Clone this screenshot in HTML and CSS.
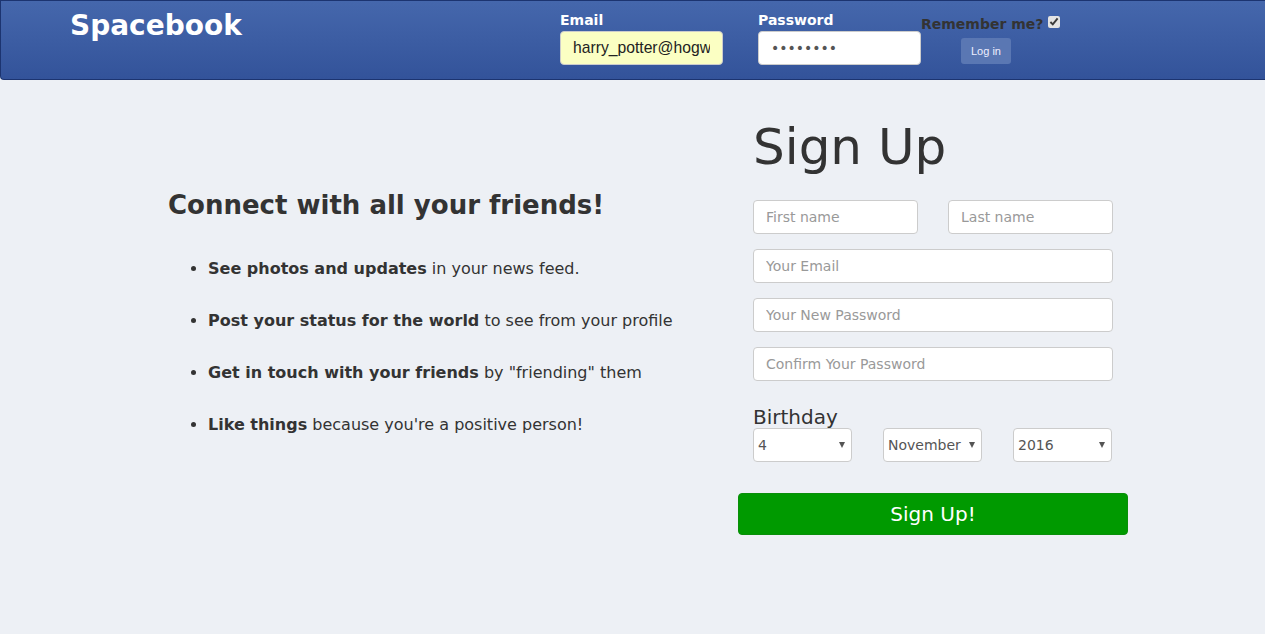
FILE: index.html
```html
<!DOCTYPE html>
<html>
<head>
<meta charset="utf-8">
<title>Spacebook</title>
<link rel="stylesheet" href="styles.css">
</head>
<body>
<header class="topbar">
  <div class="brand">Spacebook</div>
  <form class="login">
    <div class="field field-email">
      <label class="field-label">Email</label>
      <input class="top-input autofill" type="text" value="harry_potter@hogwarts.edu">
    </div>
    <div class="field field-pass">
      <label class="field-label">Password</label>
      <input class="top-input" type="password" value="password">
    </div>
    <div class="remember">
      <label class="remember-label">Remember me? <input class="remember-box" type="checkbox" checked></label>
      <button class="login-btn" type="button">Log in</button>
    </div>
  </form>
</header>

<main class="main">
  <section class="pitch">
    <h2 class="pitch-title">Connect with all your friends!</h2>
    <ul class="pitch-list">
      <li><b>See photos and updates</b> in your news feed.</li>
      <li><b>Post your status for the world</b> to see from your profile</li>
      <li><b>Get in touch with your friends</b> by "friending" them</li>
      <li><b>Like things</b> because you're a positive person!</li>
    </ul>
  </section>

  <section class="signup">
    <h1 class="signup-title">Sign Up</h1>
    <div class="row two">
      <input class="fc" type="text" placeholder="First name">
      <input class="fc" type="text" placeholder="Last name">
    </div>
    <div class="row"><input class="fc" type="text" placeholder="Your Email"></div>
    <div class="row"><input class="fc" type="password" placeholder="Your New Password"></div>
    <div class="row"><input class="fc" type="password" placeholder="Confirm Your Password"></div>
    <div class="birthday-label">Birthday</div>
    <div class="row three">
      <span class="sel-wrap"><select class="sel"><option>4</option></select></span>
      <span class="sel-wrap"><select class="sel"><option>November</option></select></span>
      <span class="sel-wrap"><select class="sel"><option>2016</option></select></span>
    </div>
    <button class="signup-btn" type="button">Sign Up!</button>
  </section>
</main>
</body>
</html>
```
FILE: styles.css
```css
html, body {
  margin: 0;
  padding: 0;
}
body {
  background: #edf0f5;
  font-family: "DejaVu Sans", sans-serif;
  color: #333;
  min-height: 634px;
  overflow-x: hidden;
}

.topbar {
  box-sizing: border-box;
  height: 80px;
  display: flex;
  padding: 5px 0 0 69px;
  background: linear-gradient(#4567ac, #33539a);
  border: 1px solid #1c3470;
  border-right: none;
  border-radius: 0 0 0 4px;
}
.brand {
  width: 490px;
  padding-top: 3px;
  font-size: 28px;
  font-weight: bold;
  color: #fff;
  line-height: 34px;
}
.login {
  display: flex;
  align-items: flex-start;
  padding-top: 4px;
}
.field-email { width: 198px; }
.field-pass { width: 163px; }
.field-label {
  display: block;
  color: #fff;
  font-weight: bold;
  font-size: 14px;
  line-height: 20px;
  margin-bottom: 1px;
}
.top-input {
  box-sizing: border-box;
  width: 163px;
  height: 34px;
  border: 1px solid #ccc;
  border-radius: 4px;
  padding: 6px 12px;
  font-size: 14px;
  background: #fff;
  color: #555;
  font-family: "DejaVu Sans", sans-serif;
  outline: none;
}
.autofill {
  background: #fbffc3;
  color: #222;
  font-family: "Liberation Sans", Arial, sans-serif;
  font-size: 15.7px;
}
.remember {
  width: 140px;
}
.remember-label {
  display: flex;
  align-items: center;
  font-weight: bold;
  font-size: 14px;
  color: #333;
  line-height: 20px;
  height: 22px;
  padding-top: 3px;
  white-space: nowrap;
}
.remember-box {
  width: 12px;
  height: 12px;
  margin: -4px 0 0 5px;
  accent-color: #e4e4e4;
}
.login-btn {
  margin: 3px 0 0 40px;
  width: 50px;
  height: 26px;
  border: none;
  border-radius: 3px;
  background: #5a77b3;
  color: #eef;
  font-family: "Liberation Sans", Arial, sans-serif;
  font-size: 11px;
  padding: 0;
}

.main {
  display: flex;
  padding-top: 40px;
}
.pitch {
  margin-left: 168px;
  width: 585px;
  padding-top: 70px;
}
.pitch-title {
  margin: 0;
  font-size: 26px;
  font-weight: bold;
  line-height: 30px;
  color: #333;
}
.pitch-list {
  margin: 38px 0 0;
  padding-left: 40px;
  font-size: 16px;
  line-height: 22px;
}
.pitch-list li {
  margin-bottom: 30px;
}

.signup {
  width: 360px;
}
.signup-title {
  margin: 0 0 25px;
  font-weight: normal;
  font-size: 50px;
  line-height: 55px;
  color: #333;
}
.row {
  display: grid;
  grid-template-columns: 1fr;
  margin-bottom: 15px;
}
.row.two {
  grid-template-columns: 165px 165px;
  column-gap: 30px;
}
.row.three {
  grid-template-columns: 99px 99px 99px;
  column-gap: 31px;
  margin-bottom: 31px;
}
.fc {
  box-sizing: border-box;
  width: 100%;
  height: 34px;
  border: 1px solid #ccc;
  border-radius: 4px;
  padding: 6px 12px;
  font-family: "DejaVu Sans", sans-serif;
  font-size: 14px;
  color: #555;
  background: #fff;
}
.fc::placeholder {
  color: #999;
}
.birthday-label {
  font-size: 20px;
  line-height: 22px;
  padding-top: 10px;
  color: #333;
}
.sel-wrap {
  position: relative;
  display: block;
  width: 99px;
  height: 34px;
}
.sel-wrap::after {
  content: "";
  position: absolute;
  right: 7px;
  top: 14px;
  border-left: 3.5px solid transparent;
  border-right: 3.5px solid transparent;
  border-top: 6px solid #555;
  pointer-events: none;
}
.sel {
  appearance: none;
  -webkit-appearance: none;
  box-sizing: border-box;
  height: 34px;
  width: 99px;
  border: 1px solid #ccc;
  border-radius: 4px;
  background: #fff;
  padding: 0 4px;
  font-family: "DejaVu Sans", sans-serif;
  font-size: 14px;
  color: #555;
}
.signup-btn {
  display: block;
  margin-left: -15px;
  width: 390px;
  height: 42px;
  border: 1px solid #0a8f0a;
  border-radius: 4px;
  background: #009a00;
  color: #fff;
  font-family: "DejaVu Sans", sans-serif;
  font-size: 20px;
  padding: 0;
}
```
